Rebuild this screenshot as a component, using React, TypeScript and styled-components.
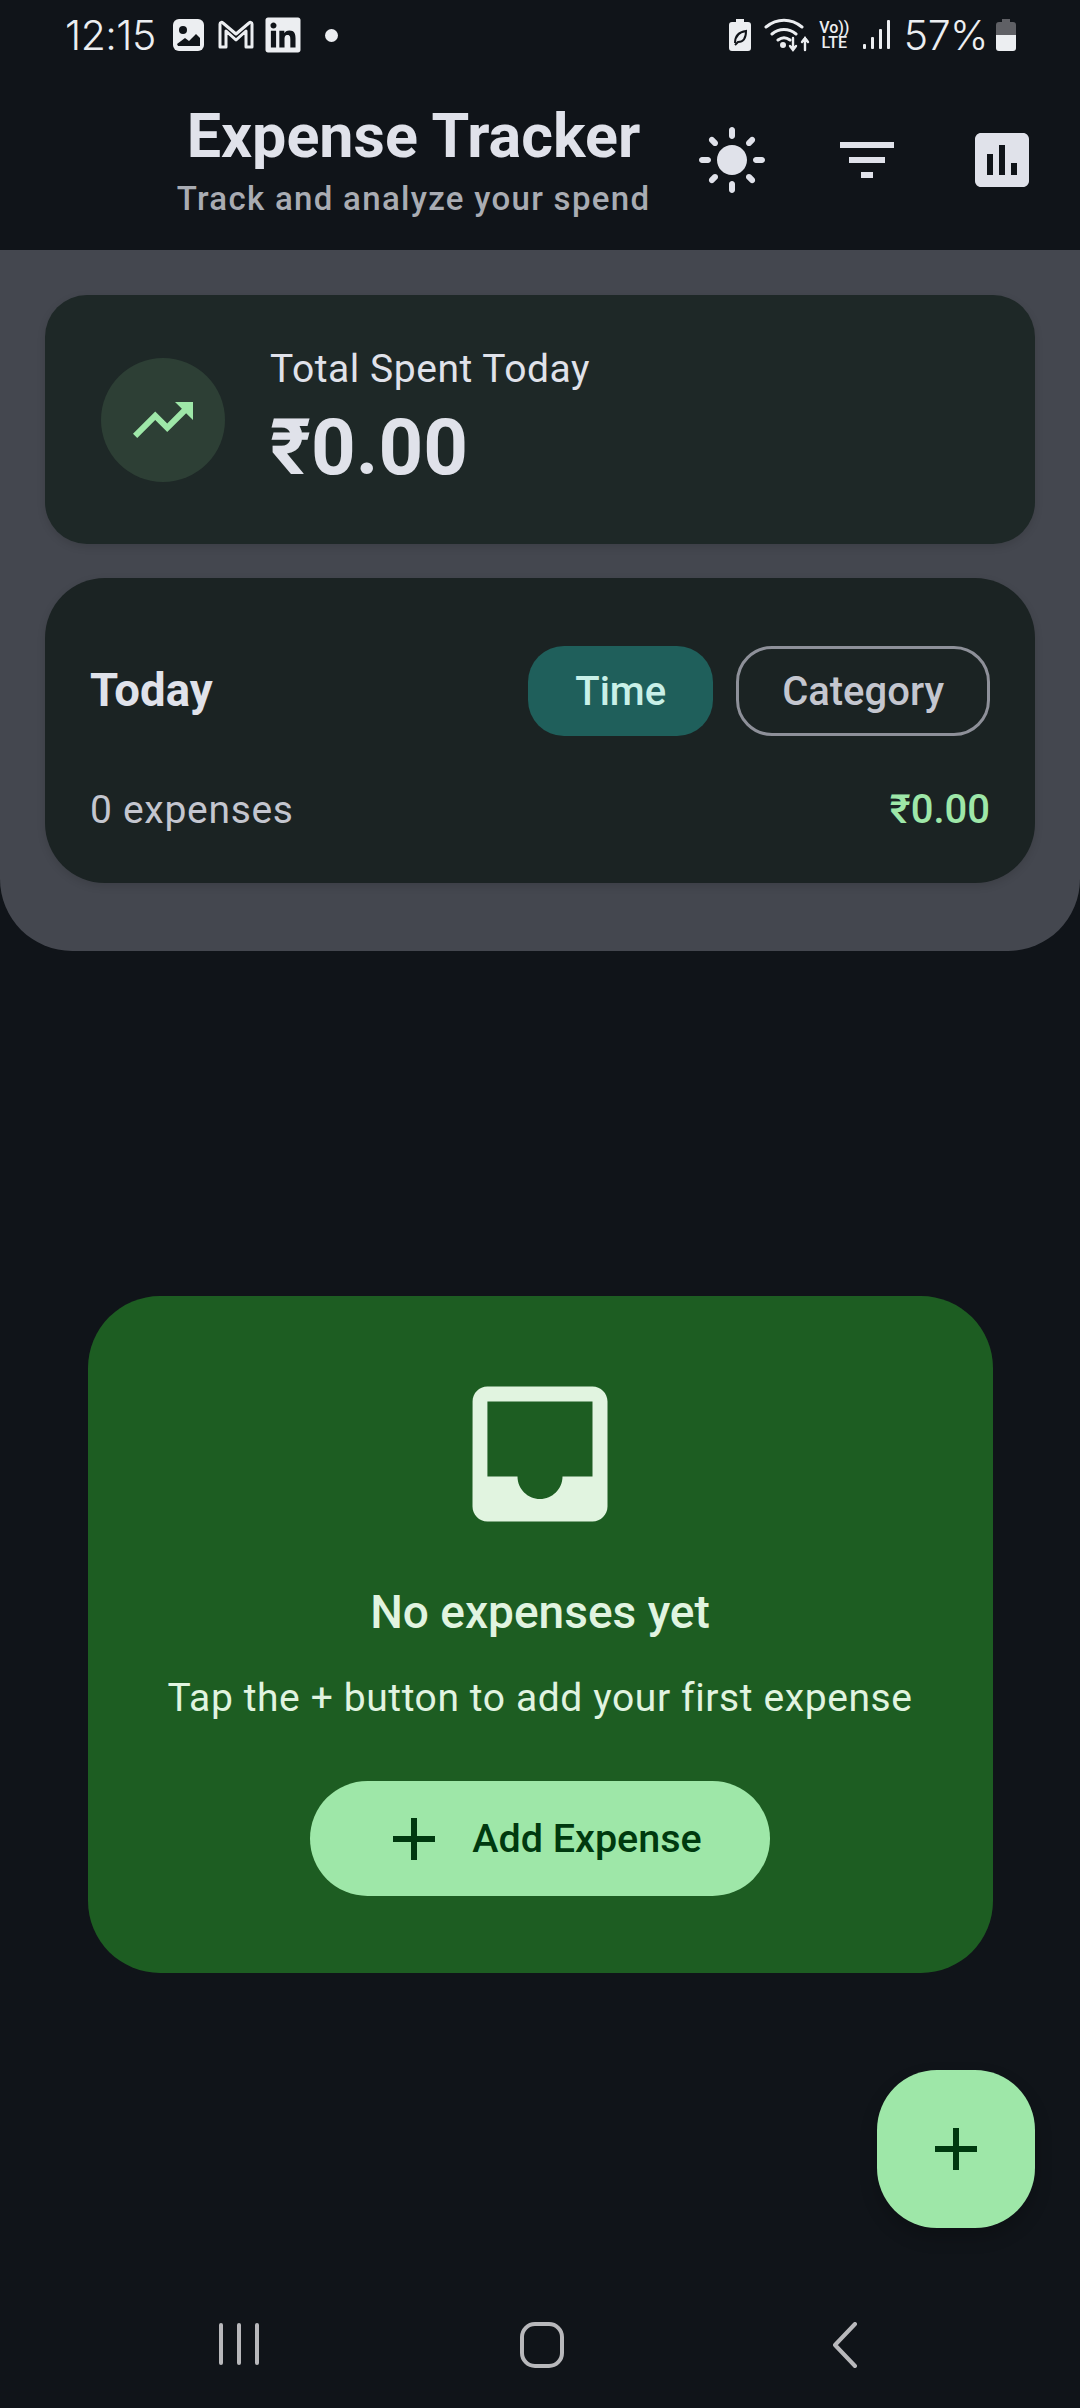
import React from 'react';
import styled, { createGlobalStyle } from 'styled-components';
import { FaLinkedin } from 'react-icons/fa';

const GlobalStyle = createGlobalStyle`
  html, body {
    margin: 0;
    padding: 0;
    background: #101419;
  }
  * {
    box-sizing: border-box;
  }
`;

const Screen = styled.div`
  position: relative;
  width: 1080px;
  height: 2408px;
  overflow: hidden;
  display: flex;
  flex-direction: column;
  background: #101419;
  font-family: Roboto, 'Noto Sans', sans-serif;
`;

const StatusBar = styled.div`
  height: 70px;
  padding: 0 64px 0 65px;
  display: flex;
  align-items: flex-start;
  justify-content: space-between;
  color: #eceef1;
`;

const StatusGroup = styled.div`
  display: flex;
  align-items: center;
  height: 70px;
`;

const StatusText = styled.span<{ $ml?: number }>`
  font-family: Inter, Roboto, sans-serif;
  font-size: 41px;
  font-weight: 300;
  line-height: 70px;
  letter-spacing: -0.5px;
  margin-left: ${({ $ml }) => $ml ?? 0}px;
`;

const StatusSvg = styled.svg<{ $ml?: number }>`
  display: block;
  flex: none;
  margin-left: ${({ $ml }) => $ml ?? 0}px;
`;

const LinkedIn = styled(FaLinkedin)`
  display: block;
  flex: none;
  width: 38px;
  height: 40px;
  margin-left: 10px;
`;

const Dot = styled.span`
  width: 13px;
  height: 13px;
  margin-left: 23px;
  border-radius: 50%;
  background: #eceef1;
`;

const VoLte = styled.span`
  display: flex;
  flex-direction: column;
  align-items: center;
  margin-left: 9px;
  width: 31px;
  font-family: Roboto, sans-serif;
  font-size: 16px;
  font-weight: 500;
  line-height: 15px;
`;

const Header = styled.header`
  height: 180px;
  padding: 0 11px 0 163px;
  display: flex;
  align-items: center;
`;

const TitleBlock = styled.div`
  flex: 1;
  display: flex;
  flex-direction: column;
  align-items: center;
  gap: 6px;
`;

const Title = styled.h1`
  margin: 0;
  font-size: 61px;
  font-weight: 700;
  line-height: 72px;
  color: #e0e2ea;
`;

const Subtitle = styled.p`
  margin: 0;
  font-size: 33px;
  font-weight: 500;
  line-height: 42px;
  letter-spacing: 1.3px;
  color: #a9acb3;
`;

const IconButton = styled.div`
  width: 135px;
  height: 135px;
  display: flex;
  align-items: center;
  justify-content: center;
  color: #e0e2ea;
`;

const Panel = styled.section`
  padding: 45px 45px 68px;
  display: flex;
  flex-direction: column;
  gap: 34px;
  background: #44474f;
  border-radius: 0 0 72px 72px;
`;

const TotalCard = styled.div`
  height: 249px;
  padding-left: 56px;
  display: flex;
  align-items: center;
  gap: 45px;
  background: #1e2827;
  border-radius: 42px;
  box-shadow: 0 3px 9px rgba(0, 0, 0, 0.12);
`;

const IconCircle = styled.div`
  width: 124px;
  height: 124px;
  border-radius: 50%;
  display: flex;
  align-items: center;
  justify-content: center;
  background: #2d3f35;
  color: #9ee7a8;
`;

const TotalText = styled.div`
  display: flex;
  flex-direction: column;
  gap: 9px;
`;

const TotalLabel = styled.span`
  font-size: 39px;
  line-height: 48px;
  letter-spacing: 0.55px;
  color: #e0e2ea;
`;

const TotalValue = styled.span`
  font-size: 78px;
  font-weight: 700;
  line-height: 92px;
  color: #e0e2ea;
`;

const DayCard = styled.div`
  height: 305px;
  padding: 68px 45px 0;
  background: #1b2323;
  border-radius: 60px;
  box-shadow: 0 3px 9px rgba(0, 0, 0, 0.12);
`;

const DayRow = styled.div<{ $mt?: number }>`
  display: flex;
  align-items: center;
  justify-content: space-between;
  margin-top: ${({ $mt }) => $mt ?? 0}px;
`;

const DayTitle = styled.span`
  font-size: 45.5px;
  font-weight: 700;
  line-height: 60px;
  color: #e0e2ea;
`;

const Toggles = styled.div`
  display: flex;
  gap: 23px;
`;

const Toggle = styled.div<{ $active?: boolean }>`
  height: 90px;
  padding: 0 ${({ $active }) => ($active ? 47 : 43)}px;
  display: flex;
  align-items: center;
  border-radius: 36px;
  font-size: 40px;
  font-weight: 500;
  background: ${({ $active }) => ($active ? '#1f5f5b' : 'transparent')};
  border: ${({ $active }) => ($active ? 'none' : '3px solid #8e9099')};
  color: ${({ $active }) => ($active ? '#c8f0e8' : '#c4c6cf')};
`;

const DayCount = styled.span`
  font-size: 39px;
  line-height: 60px;
  letter-spacing: 0.7px;
  color: #c4c6cf;
`;

const DayAmount = styled.span`
  font-size: 40px;
  font-weight: 500;
  line-height: 60px;
  color: #9ee7a8;
`;

const Main = styled.main`
  flex: 1;
  display: flex;
  align-items: center;
  justify-content: center;
`;

const EmptyCard = styled.div`
  width: 905px;
  height: 677px;
  padding-top: 68px;
  display: flex;
  flex-direction: column;
  align-items: center;
  background: #1d5d22;
  border-radius: 72px;
  color: #e1f4e0;
`;

const EmptyTitle = styled.h2`
  margin: 38px 0 0;
  font-size: 46px;
  font-weight: 500;
  line-height: 60px;
`;

const EmptyText = styled.p`
  margin: 26px 0 0;
  font-size: 39px;
  line-height: 60px;
  letter-spacing: 0.6px;
`;

const AddButton = styled.div`
  width: 460px;
  height: 115px;
  margin-top: 53px;
  display: flex;
  align-items: center;
  justify-content: center;
  gap: 22px;
  border-radius: 58px;
  background: #9ee7a8;
  color: #00390f;
  font-size: 39.5px;
  font-weight: 500;
`;

const Fab = styled.div`
  position: absolute;
  left: 877px;
  top: 2070px;
  width: 158px;
  height: 158px;
  display: flex;
  align-items: center;
  justify-content: center;
  border-radius: 60px;
  background: #9ee7a8;
  color: #00390f;
  box-shadow: 0 9px 18px rgba(0, 0, 0, 0.2);
`;

const NavBar = styled.nav`
  height: 90px;
  padding: 4px 87px 0;
  display: grid;
  grid-template-columns: repeat(3, 303px);
  align-items: start;
  justify-items: center;
  color: #b8b8bb;
`;

const Icon: React.FC<{ d: string; size?: number }> = ({ d, size = 72 }) => (
  <svg width={size} height={size} viewBox="0 0 24 24" fill="currentColor">
    <path d={d} />
  </svg>
);

const SUN =
  'M12 7c-2.76 0-5 2.24-5 5s2.24 5 5 5 5-2.24 5-5-2.24-5-5-5zM2 13h2c.55 0 1-.45 1-1s-.45-1-1-1H2c-.55 0-1 .45-1 1s.45 1 1 1zm18 0h2c.55 0 1-.45 1-1s-.45-1-1-1h-2c-.55 0-1 .45-1 1s.45 1 1 1zM11 2v2c0 .55.45 1 1 1s1-.45 1-1V2c0-.55-.45-1-1-1s-1 .45-1 1zm0 18v2c0 .55.45 1 1 1s1-.45 1-1v-2c0-.55-.45-1-1-1s-1 .45-1 1zM5.99 4.58c-.39-.39-1.03-.39-1.41 0-.39.39-.39 1.03 0 1.41l1.06 1.06c.39.39 1.03.39 1.41 0s.39-1.03 0-1.41L5.99 4.58zm12.37 12.37c-.39-.39-1.03-.39-1.41 0-.39.39-.39 1.03 0 1.41l1.06 1.06c.39.39 1.03.39 1.41 0 .39-.39.39-1.03 0-1.41l-1.06-1.06zm1.06-10.96c.39-.39.39-1.03 0-1.41-.39-.39-1.03-.39-1.41 0l-1.06 1.06c-.39.39-.39 1.03 0 1.41s1.03.39 1.41 0l1.06-1.06zM7.05 18.36c.39-.39.39-1.03 0-1.41-.39-.39-1.03-.39-1.41 0l-1.06 1.06c-.39.39-.39 1.03 0 1.41s1.03.39 1.41 0l1.06-1.06z';
const FILTER = 'M10 18h4v-2h-4v2zM3 6v2h18V6H3zm3 7h12v-2H6v2z';
const CHART =
  'M19 3H5c-1.1 0-2 .9-2 2v14c0 1.1.9 2 2 2h14c1.1 0 2-.9 2-2V5c0-1.1-.9-2-2-2zM9 17H7v-7h2v7zm4 0h-2V7h2v10zm4 0h-2v-4h2v4z';
const TRENDING = 'M16 6l2.29 2.29-4.88 4.88-4-4L2 16.59 3.41 18l6-6 4 4 6.3-6.29L22 12V6z';
const INBOX =
  'M19 3H4.99c-1.11 0-1.98.89-1.98 2L3 19c0 1.1.88 2 1.99 2H19c1.1 0 2-.9 2-2V5c0-1.11-.9-2-2-2zm0 12h-4c0 1.66-1.35 3-3 3s-3-1.34-3-3H4.99V5H19v10z';
const PLUS = 'M19 13h-6v6h-2v-6H5v-2h6V5h2v6h6v2z';

const App: React.FC = () => (
  <Screen>
    <GlobalStyle />
    <StatusBar>
      <StatusGroup>
        <StatusText>12:15</StatusText>
        <StatusSvg $ml={17} width="31" height="32" viewBox="0 0 31 32">
          <rect width="31" height="32" rx="6" fill="currentColor" />
          <circle cx="10" cy="11" r="4" fill="#101419" />
          <path d="M4 25l8-6 4 3 7-7 4 4v8H5z" fill="#101419" />
        </StatusSvg>
        <StatusSvg $ml={14} width="36" height="30" viewBox="0 0 36 30" fill="none" stroke="currentColor" strokeWidth="3">
          <path d="M2 27V4c0-2 2-2 3-1l13 11L31 3c1-1 3-1 3 1v23h-6V11L18 20 8 11v16z" strokeLinejoin="round" />
        </StatusSvg>
        <LinkedIn />
        <Dot />
      </StatusGroup>
      <StatusGroup>
        <StatusSvg width="22" height="32" viewBox="0 0 22 32">
          <path d="M7 0h8v3h4c2 0 3 1 3 3v23c0 2-1 3-3 3H3c-2 0-3-1-3-3V6c0-2 1-3 3-3h4z" fill="currentColor" />
          <path d="M6 24c0-7 4-11 11-12 0 7-3 11-8 11l-3 3" fill="none" stroke="#101419" strokeWidth="2" />
        </StatusSvg>
        <StatusSvg $ml={13} width="46" height="34" viewBox="0 0 46 34" fill="none" stroke="currentColor" strokeWidth="3" strokeLinecap="round">
          <path d="M2 9c11-9 25-9 36 0M8 16c7-6 17-6 24 0M14 22c4-3 8-3 12 0" />
          <circle cx="19" cy="27" r="1.5" fill="currentColor" />
          <path d="M29 20v12m-3-4l3 4 3-4M41 32V20m-3 4l3-4 3 4" strokeWidth="2.4" />
        </StatusSvg>
        <VoLte>
          <span>Vo))</span>
          <span>LTE</span>
        </VoLte>
        <StatusSvg $ml={13} width="27" height="30" viewBox="0 0 27 30" fill="currentColor">
          <rect x="0" y="24" width="3" height="5" rx="1" />
          <rect x="8" y="17" width="3" height="12" rx="1" />
          <rect x="16" y="9" width="3" height="20" rx="1" />
          <rect x="24" y="0" width="3" height="29" rx="1" />
        </StatusSvg>
        <StatusText $ml={14}>57%</StatusText>
        <StatusSvg $ml={8} width="20" height="32" viewBox="0 0 20 32">
          <path d="M6 0h8v3h3c2 0 3 1 3 3v10H0V6c0-2 1-3 3-3h3z" fill="#5f6065" />
          <path d="M0 16h20v13c0 2-1 3-3 3H3c-2 0-3-1-3-3z" fill="currentColor" />
        </StatusSvg>
      </StatusGroup>
    </StatusBar>

    <Header>
      <TitleBlock>
        <Title>Expense Tracker</Title>
        <Subtitle>Track and analyze your spend</Subtitle>
      </TitleBlock>
      <IconButton>
        <Icon d={SUN} />
      </IconButton>
      <IconButton>
        <Icon d={FILTER} />
      </IconButton>
      <IconButton>
        <Icon d={CHART} />
      </IconButton>
    </Header>

    <Panel>
      <TotalCard>
        <IconCircle>
          <Icon d={TRENDING} />
        </IconCircle>
        <TotalText>
          <TotalLabel>Total Spent Today</TotalLabel>
          <TotalValue>₹0.00</TotalValue>
        </TotalText>
      </TotalCard>
      <DayCard>
        <DayRow>
          <DayTitle>Today</DayTitle>
          <Toggles>
            <Toggle $active>Time</Toggle>
            <Toggle>Category</Toggle>
          </Toggles>
        </DayRow>
        <DayRow $mt={44}>
          <DayCount>0 expenses</DayCount>
          <DayAmount>₹0.00</DayAmount>
        </DayRow>
      </DayCard>
    </Panel>

    <Main>
      <EmptyCard>
        <Icon d={INBOX} size={180} />
        <EmptyTitle>No expenses yet</EmptyTitle>
        <EmptyText>Tap the + button to add your first expense</EmptyText>
        <AddButton>
          <Icon d={PLUS} />
          Add Expense
        </AddButton>
      </EmptyCard>
    </Main>

    <Fab>
      <Icon d={PLUS} />
    </Fab>

    <NavBar>
      <svg width="40" height="44" viewBox="0 0 40 44" fill="currentColor">
        <rect x="0" y="1" width="4" height="42" rx="2" />
        <rect x="18" y="1" width="4" height="42" rx="2" />
        <rect x="36" y="1" width="4" height="42" rx="2" />
      </svg>
      <svg width="44" height="46" viewBox="0 0 44 46" fill="none" stroke="currentColor" strokeWidth="4">
        <rect x="2" y="2" width="40" height="42" rx="13" />
      </svg>
      <svg width="26" height="46" viewBox="0 0 26 46" fill="none" stroke="currentColor" strokeWidth="4" strokeLinecap="round" strokeLinejoin="round">
        <path d="M23 2L3 23l20 21" />
      </svg>
    </NavBar>
  </Screen>
);

export default App;
